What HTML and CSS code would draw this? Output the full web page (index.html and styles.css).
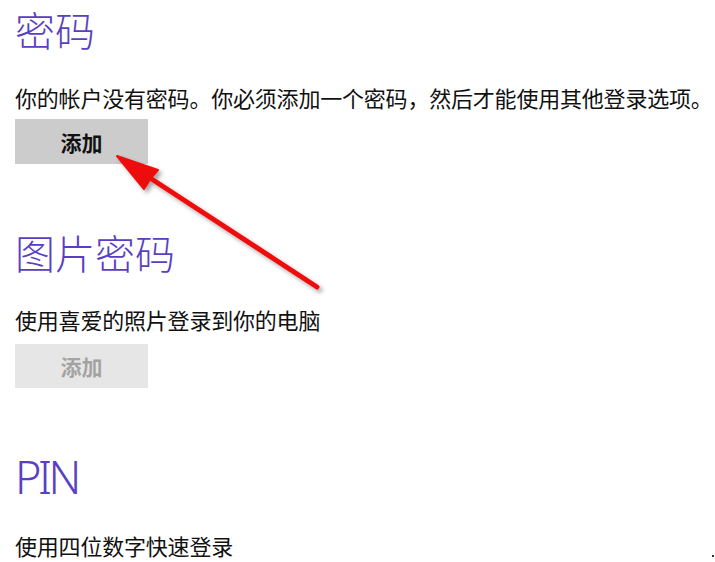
FILE: index.html
```html
<!DOCTYPE html>
<html lang="zh-CN">
<head>
<meta charset="utf-8">
<title>登录选项</title>
<link rel="stylesheet" href="styles.css">
</head>
<body>
<main class="page">
  <section class="group group-password">
    <h1 class="heading">密码</h1>
    <p class="desc">你的帐户没有密码。你必须添加一个密码，然后才能使用其他登录选项。</p>
    <button class="btn btn-active" type="button">添加</button>
  </section>
  <section class="group group-picture">
    <h1 class="heading">图片密码</h1>
    <p class="desc">使用喜爱的照片登录到你的电脑</p>
    <button class="btn btn-disabled" type="button">添加</button>
  </section>
  <section class="group group-pin">
    <h1 class="heading heading-latin">PIN</h1>
    <p class="desc">使用四位数字快速登录</p>
  </section>
  <svg class="arrow" width="715" height="562" viewBox="0 0 715 562" aria-hidden="true">
    <defs>
      <filter id="sh" x="-20%" y="-20%" width="140%" height="140%">
        <feDropShadow dx="3" dy="3" stdDeviation="2" flood-color="#000" flood-opacity="0.35"/>
      </filter>
    </defs>
    <g filter="url(#sh)" fill="#ee1111" stroke="#ee1111" stroke-linejoin="round" stroke-linecap="round">
      <line x1="147" y1="176" x2="317" y2="287" stroke-width="5"/>
      <polygon points="117,156 158,170 151,178 144,189" stroke-width="2"/>
    </g>
  </svg>
  <span class="dot"></span>
</main>
</body>
</html>
```
FILE: styles.css
```css
html, body {
  margin: 0;
  padding: 0;
  background: #ffffff;
}
body {
  width: 715px;
  height: 562px;
  overflow: hidden;
  font-family: "Noto Sans CJK SC", "Noto Sans", sans-serif;
  color: #111111;
}
.page {
  position: relative;
  width: 715px;
  height: 562px;
  padding: 0 0 0 15px;
  box-sizing: border-box;
  display: flex;
  flex-direction: column;
}
.group {
  display: flex;
  flex-direction: column;
  align-items: flex-start;
}
.heading {
  margin: 0;
  font-size: 40px;
  line-height: 58px;
  font-weight: 300;
  color: #5a3fc2;
  letter-spacing: 0;
}
.heading-latin {
  font-family: "Noto Sans", "Noto Sans CJK SC", sans-serif;
  font-size: 45px;
  line-height: 54px;
  font-weight: 300;
  letter-spacing: -3.5px;
}
.desc {
  margin: 24px 0 0 0;
  font-size: 22px;
  line-height: 30px;
  font-weight: 400;
  letter-spacing: -0.2px;
  white-space: nowrap;
}
.btn {
  margin-top: 7px;
  width: 133px;
  height: 45px;
  border: 0;
  padding: 0;
  font-family: "Noto Sans CJK SC", sans-serif;
  font-size: 21px;
  font-weight: 700;
}
.btn-active {
  background: #cccccc;
  color: #111111;
}
.btn-disabled {
  margin-top: 10px;
  height: 44px;
  background: #e6e6e6;
  color: #a3a3a3;
}
.group-picture {
  margin-top: 59px;
}
.group-picture .desc {
  margin-top: 23px;
}
.group-pin {
  margin-top: 62px;
}
.group-pin .desc {
  margin-top: 26px;
}
.arrow {
  position: absolute;
  left: 0;
  top: 0;
  pointer-events: none;
}
.dot {
  position: absolute;
  left: 712px;
  top: 555px;
  width: 2px;
  height: 2px;
  background: #333333;
}
```
